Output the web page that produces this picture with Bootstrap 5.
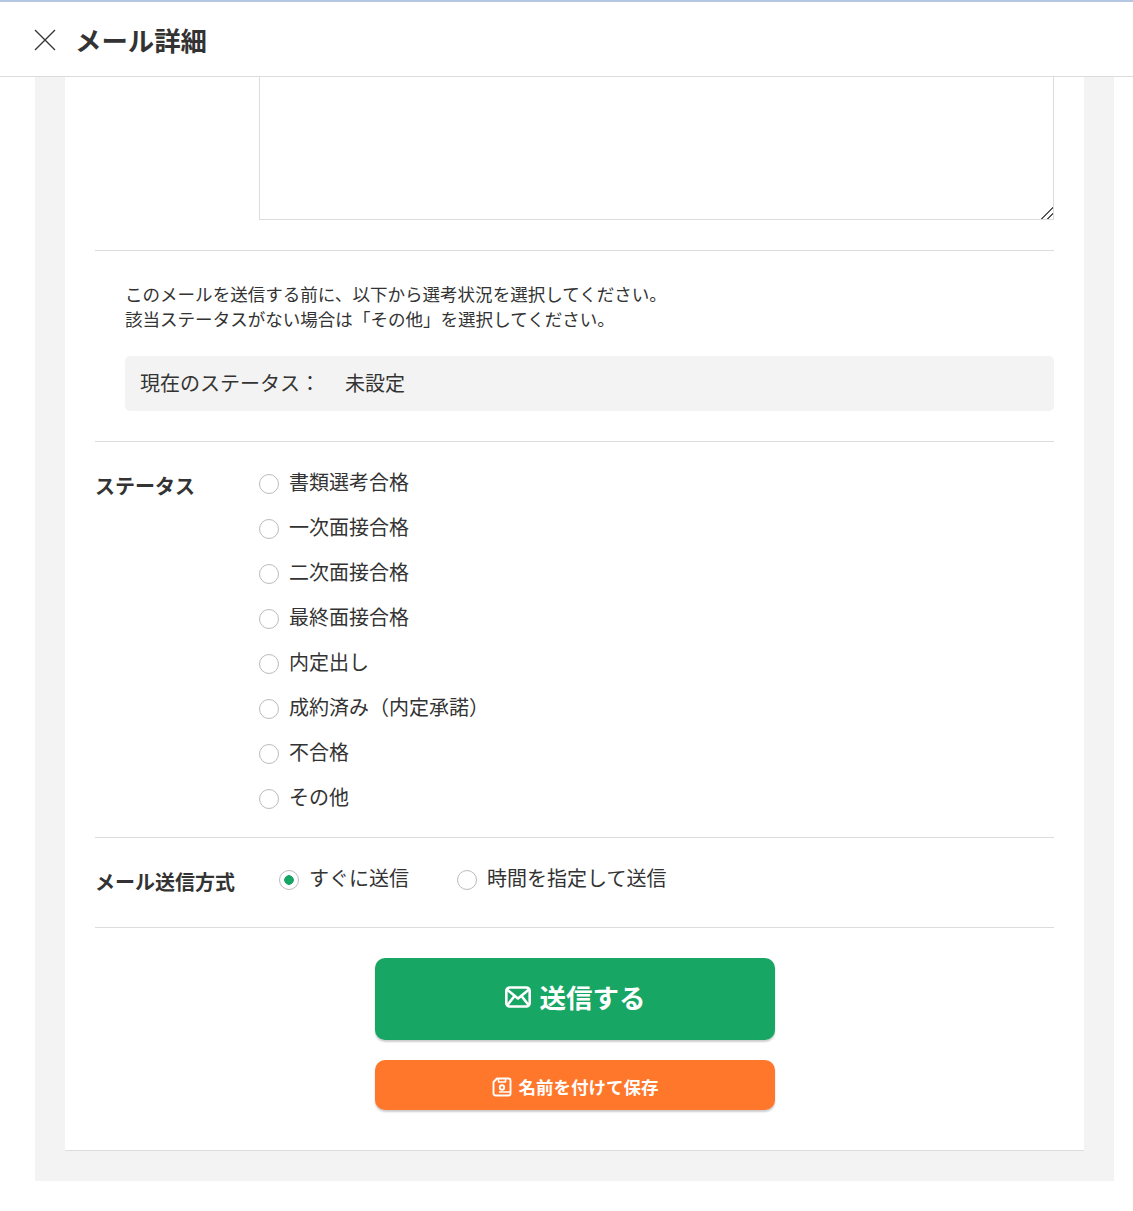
<!DOCTYPE html>
<html lang="ja">
<head>
<meta charset="utf-8">
<title>メール詳細</title>
<link href="https://cdn.jsdelivr.net/npm/bootstrap@5.3.0/dist/css/bootstrap.min.css" rel="stylesheet">
<style>
html,body{height:100%}
body{font-family:"Noto Sans CJK JP","Noto Sans",sans-serif;color:#333;background:#fff;overflow:hidden;border-top:2px solid #b4c6e2}
.mail-head{height:75px;border-bottom:1px solid #dcdcdc;padding-left:34px;padding-top:1px;gap:19px}
.mail-title{font-size:26.4px;font-weight:700;line-height:1;margin:2px 0 0;color:#333}
.mail-panel{margin:0 19px 0 35px;padding:0 30px 30px;background:#f3f3f3}
.mail-sheet{background:#fff;border-bottom:1px solid #dcdcdc;padding:0 30px 40px}
.body-area{display:block;width:795px;height:143px;margin-left:164px;border:1px solid #dcdcdc;border-top:0;border-radius:0;resize:both;padding:0}
.body-area::-webkit-resizer{background:linear-gradient(135deg,transparent 46%,#555 46%,#555 55%,transparent 55%,transparent 71%,#555 71%,#555 80%,transparent 80%) no-repeat right bottom/12px 12px}
.rule{height:1px;background:#dcdcdc}
.rule-first{margin-top:30px}
.notice{padding:30px 0 0 30px;font-size:17.55px;line-height:25px;margin:0 0 1px}
.state-box{margin:25px 0 30px 30px;height:55px;background:#f3f3f3;border-radius:5px;padding:0 0 2px 15px;font-size:20px;gap:25px}
.field-label{font-size:20px;font-weight:700;color:#333;line-height:1}
.status-label-col{width:164px;padding-top:33px}
.status-list{padding:26px 0 26px;gap:17px}
.pick{gap:10px;margin:0;height:28px;font-size:20px;line-height:28px;min-height:0;padding:0}
.pick .form-check-input{width:20px;height:20px;margin:4px 0 0;float:none;border:1px solid #bbb;flex:none}
.pick .form-check-input:checked{background-color:#fff;border-color:#bbb;background-image:radial-gradient(circle,#17a565 0,#17a565 4.5px,transparent 5px)}
.send-row{height:89px;padding-bottom:6px}
.send-label-col{width:184px;padding-top:6px}
.send-row .pick{margin-top:-4px}
.send-btn{display:flex;width:400px;height:82px;margin:30px auto 20px 280px;padding:0 0 4px;background:#18a665;color:#fff;border:0;border-radius:10px;font-size:26.5px;font-weight:700;box-shadow:0 2px 2px rgba(0,0,0,.2);gap:9px}
.save-btn{display:flex;width:400px;height:50px;margin-left:280px;background:#ff772a;color:#fff;border:0;border-radius:10px;font-size:17.5px;font-weight:700;box-shadow:0 2px 2px rgba(0,0,0,.2);gap:7px;padding:4px 0 0}
.send-btn:hover,.save-btn:hover{color:#fff}
</style>
</head>
<body>
<header class="mail-head d-flex align-items-center">
  <svg width="22" height="22" viewBox="0 0 22 22" fill="none" stroke="#333" stroke-width="1.3" aria-label="閉じる"><path d="M1 1 21 21M21 1 1 21"/></svg>
  <h1 class="mail-title">メール詳細</h1>
</header>
<main class="mail-panel">
  <div class="mail-sheet">
    <textarea class="form-control body-area" aria-label="本文"></textarea>
    <div class="rule rule-first"></div>
    <p class="notice">このメールを送信する前に、以下から選考状況を選択してください。<br>該当ステータスがない場合は「その他」を選択してください。</p>
    <div class="state-box d-flex align-items-center"><span>現在のステータス：</span><span>未設定</span></div>
    <div class="rule"></div>
    <div class="d-flex">
      <div class="status-label-col"><span class="field-label">ステータス</span></div>
      <div class="status-list d-flex flex-column">
        <label class="pick d-flex align-items-center form-check"><input class="form-check-input" type="radio" name="st">書類選考合格</label>
        <label class="pick d-flex align-items-center form-check"><input class="form-check-input" type="radio" name="st">一次面接合格</label>
        <label class="pick d-flex align-items-center form-check"><input class="form-check-input" type="radio" name="st">二次面接合格</label>
        <label class="pick d-flex align-items-center form-check"><input class="form-check-input" type="radio" name="st">最終面接合格</label>
        <label class="pick d-flex align-items-center form-check"><input class="form-check-input" type="radio" name="st">内定出し</label>
        <label class="pick d-flex align-items-center form-check"><input class="form-check-input" type="radio" name="st">成約済み（内定承諾）</label>
        <label class="pick d-flex align-items-center form-check"><input class="form-check-input" type="radio" name="st">不合格</label>
        <label class="pick d-flex align-items-center form-check"><input class="form-check-input" type="radio" name="st">その他</label>
      </div>
    </div>
    <div class="rule"></div>
    <div class="send-row d-flex align-items-center">
      <div class="send-label-col"><span class="field-label">メール送信方式</span></div>
      <label class="pick d-flex align-items-center form-check me-5"><input class="form-check-input" type="radio" name="how" checked>すぐに送信</label>
      <label class="pick d-flex align-items-center form-check"><input class="form-check-input" type="radio" name="how">時間を指定して送信</label>
    </div>
    <div class="rule"></div>
    <button class="btn send-btn align-items-center justify-content-center" type="button">
      <svg width="26" height="22" viewBox="0 0 26 22" fill="none" stroke="#fff" stroke-width="2.6" stroke-linejoin="round"><rect x="1.300" y="1.500" width="23.400" height="19" rx="3.500"/><path d="M2 3.500 13 12.500 24 3.500M2.500 19 9.500 10M23.500 19 16.500 10"/></svg>
      <span>送信する</span>
    </button>
    <button class="btn save-btn align-items-center justify-content-center" type="button">
      <svg width="20" height="20" viewBox="0 0 20 20" fill="none" stroke="#fff" stroke-width="1.900" stroke-linejoin="round"><path d="M5 1.500H16.500A2 2 0 0 1 18.500 3.500V16.500A2 2 0 0 1 16.500 18.500H3.500A2 2 0 0 1 1.500 16.500V5Z"/><path d="M6.500 1.500V5H13.500V1.500" stroke-width="1.500"/><circle cx="10" cy="10.500" r="2.200"/><path d="M7 15H18" stroke-width="1.500"/></svg>
      <span>名前を付けて保存</span>
    </button>
  </div>
</main>
</body>
</html>
